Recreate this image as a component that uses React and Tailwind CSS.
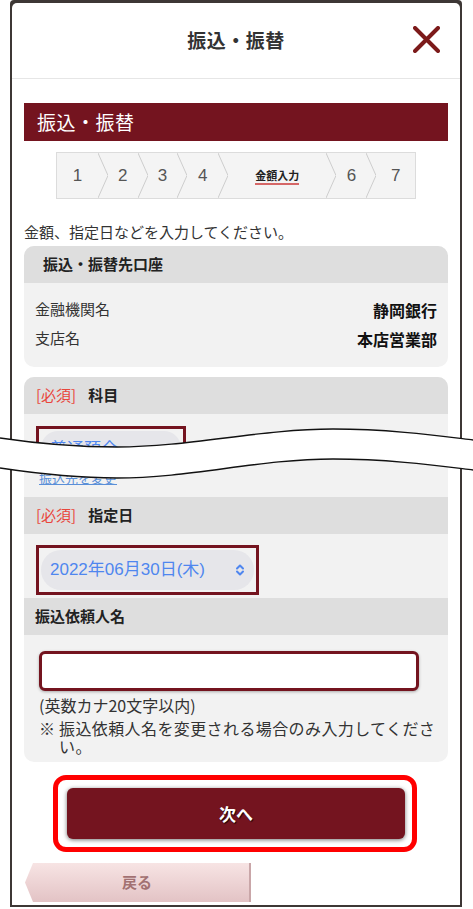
import React from "react";

const steps = [
  { label: "1", w: "w-[41px]" },
  { label: "2", w: "w-[30px]" },
  { label: "3", w: "w-[30px]" },
  { label: "4", w: "w-[31px]" },
  { label: "金額入力", w: "w-[99px]", current: true },
  { label: "6", w: "w-[30px]" },
  { label: "7", w: "w-[39px]" },
];

const Chevron = () => (
  <svg width="10" height="45" viewBox="0 0 10 45" className="shrink-0">
    <polyline points="0,0 10,22.5 0,45" fill="none" stroke="#cdcdcd" strokeWidth="1" />
  </svg>
);

const Required = ({ children }) => (
  <div className="h-[37px] bg-[#dedede] flex items-center pl-3 text-[15px] font-bold text-[#222]">
    <span className="text-[#e8463c] font-normal mr-3">[必須]</span>
    {children}
  </div>
);

export default function App() {
  return (
    <div className="w-[473px] h-[909px] bg-white relative overflow-hidden font-['Noto_Sans_CJK_JP',sans-serif] text-[#333]">
      {/* phone frame */}
      <div className="mx-[10px] w-[452px] h-[907px] bg-[#3d3735] px-[2px] pt-[3px] pb-[2px] rounded-t-[4px]">
        <div className="bg-white h-full rounded-t-[5px] overflow-hidden">
          {/* header */}
          <div className="h-[76px] border-b border-[#e6e6e6] flex items-center justify-center relative">
            <h1 className="text-[19px] font-bold text-[#333] tracking-[0.5px]">振込・振替</h1>
            <svg width="27" height="27" viewBox="0 0 27 27" className="absolute right-[20px] top-[23px]">
              <path d="M2 2 L25 25 M25 2 L2 25" stroke="#7c1a1a" strokeWidth="4" strokeLinecap="round" />
            </svg>
          </div>

          <div className="px-3 pt-6">
            {/* title bar */}
            <div className="h-[38px] bg-[#74141f] flex items-center pl-[13px] text-white text-[19px] tracking-[0.5px]">
              振込・振替
            </div>

            {/* steps */}
            <div className="mt-[11px] ml-[32px] w-[360px] h-[47px] border border-[#dcdcdc] bg-[#f4f4f4] flex items-center">
              {steps.map((s, i) => (
                <React.Fragment key={s.label}>
                  {i > 0 && <Chevron />}
                  <div className={`${s.w} h-full flex items-center justify-center`}>
                    {s.current ? (
                      <span className="text-[11px] font-bold text-[#222] border-b-2 border-[#d56767] leading-[15px] mt-[2px]">
                        {s.label}
                      </span>
                    ) : (
                      <span className="font-['Liberation_Sans',sans-serif] text-[17px] text-[#555]">{s.label}</span>
                    )}
                  </div>
                </React.Fragment>
              ))}
            </div>

            <p className="mt-[22px] text-[15px] leading-[22px] text-[#333]">金額、指定日などを入力してください。</p>

            {/* payee account */}
            <div className="mt-[3px] rounded-[10px] overflow-hidden bg-[#f2f2f2]">
              <div className="h-[37px] bg-[#dedede] flex items-center pl-[19px] text-[15px] font-bold text-[#222]">
                振込・振替先口座
              </div>
              <div className="pt-[12px] pb-[14px] px-[11px]">
                <div className="h-[29px] flex items-center justify-between">
                  <span className="text-[15px] text-[#333]">金融機関名</span>
                  <span className="text-[16px] font-bold text-[#111]">静岡銀行</span>
                </div>
                <div className="h-[29px] flex items-center justify-between">
                  <span className="text-[15px] text-[#333]">支店名</span>
                  <span className="text-[16px] font-bold text-[#111]">本店営業部</span>
                </div>
              </div>
            </div>

            {/* form */}
            <div className="mt-[10px] rounded-[10px] overflow-hidden bg-[#f2f2f2]">
              <Required>科目</Required>
              <div className="h-[83px] pt-[12px] px-3">
                <div className="w-[150px] h-[44px] border-[3px] border-[#74141f] p-[2px]">
                  <div className="h-full rounded-full bg-[#e6e6ea] flex items-center pl-[9px] text-[17px] text-[#4f86ef]">
                    普通預金
                  </div>
                </div>
                <a className="block mt-[1px] ml-[3px] text-[13px] leading-[14px] text-[#5a8fd8] underline">振込先を変更</a>
              </div>

              <Required>指定日</Required>
              <div className="pt-[11px] pb-[3px] px-3">
                <div className="w-[223px] h-[50px] border-[3px] border-[#74141f] p-[2px]">
                  <div className="h-full rounded-full bg-[#e6e6ea] flex items-center justify-between pl-[9px] pr-[9px]">
                    <span className="font-['Liberation_Sans','Noto_Sans_CJK_JP',sans-serif] text-[17px] text-[#4f86ef]">
                      2022年06月30日(木)
                    </span>
                    <svg width="10" height="14" viewBox="0 0 10 14">
                      <path d="M2 5.5 L5 2.5 L8 5.5 M2 8.5 L5 11.5 L8 8.5" fill="none" stroke="#4f86ef" strokeWidth="2" strokeLinecap="round" strokeLinejoin="round" />
                    </svg>
                  </div>
                </div>
              </div>

              <div className="h-[37px] bg-[#dedede] flex items-center pl-[11px] text-[15px] font-bold text-[#222]">
                振込依頼人名
              </div>
              <div className="pt-[16px] pb-[7px] pr-[10px]">
                <input
                  type="text"
                  className="block ml-[15px] w-[380px] h-[40px] rounded-[6px] border-[3px] border-[#74141f] bg-white shadow-[0_1px_3px_rgba(0,0,0,0.3)]"
                />
                <p className="mt-[5px] ml-[15px] text-[16px] leading-[18px] text-[#333]">(英数カナ20文字以内)</p>
                <div className="mt-[5px] ml-[15px] flex text-[16px] leading-[18px] tracking-[0.4px] text-[#333]">
                  <span className="w-[20px] shrink-0">※</span>
                  <span>振込依頼人名を変更される場合のみ入力してください。</span>
                </div>
              </div>
            </div>

            {/* next */}
            <div className="mt-[13px] ml-[29px] w-[364px] h-[77px] border-[5px] border-[#ff0000] rounded-[13px] pt-[8px] pb-[8px] pl-[9px] pr-[7px]">
              <button className="w-full h-full rounded-[6px] bg-[#74141f] shadow-[0_1px_4px_rgba(0,0,0,0.55)] text-white text-[17px] font-bold [text-shadow:1px_1px_1px_rgba(0,0,0,0.8)]">
                次へ
              </button>
            </div>

            {/* back */}
            <button className="mt-[11px] ml-[1px] w-[226px] h-[39px] bg-gradient-to-b from-[#f7e4e4] to-[#e3c3c5] [clip-path:polygon(8px_0,100%_0,100%_100%,8px_100%,0_50%)] border-r-2 border-[#c9a6a8] text-[15px] font-bold text-[#a27172]">
              戻る
            </button>
          </div>
        </div>
      </div>

      {/* torn cut over the page */}
      <svg width="473" height="65" viewBox="0 420 473 65" className="absolute left-0 top-[420px]">
        <path
          d="M0,438 C40,444 80,447 117,447 C190,447 260,429 333,429 C390,429 440,436 473,440 L473,470 C440,466 390,459 333,459 C260,459 190,478 117,478 C80,478 40,474 0,468 Z"
          fill="#ffffff"
        />
        <path d="M0,438 C40,444 80,447 117,447 C190,447 260,429 333,429 C390,429 440,436 473,440" fill="none" stroke="#111" strokeWidth="1.3" />
        <path d="M0,468 C40,474 80,478 117,478 C190,478 260,459 333,459 C390,459 440,466 473,470" fill="none" stroke="#111" strokeWidth="1.3" />
      </svg>
    </div>
  );
}
